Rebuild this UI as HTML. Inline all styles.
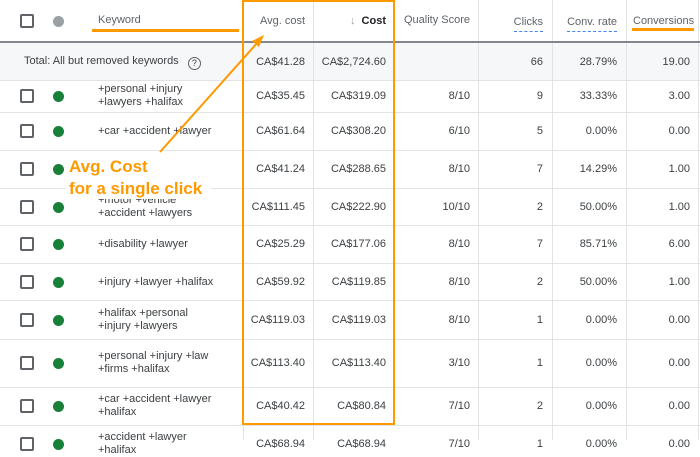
<!DOCTYPE html>
<html><head><meta charset="utf-8"><style>
*{margin:0;padding:0;box-sizing:border-box}
body{width:700px;height:440px;overflow:hidden;background:#fff;font-family:"Liberation Sans",Arial,sans-serif;font-size:11px;color:#3c4043;position:relative}
.a{position:absolute}
.vl{position:absolute;top:0;height:440px;width:1px;background:#e3e3e3}
.hl{position:absolute;left:0;width:700px;height:1px;background:#e3e3e3}
.cb{position:absolute;left:20px;width:14px;height:14px;border:2px solid #5f6368;border-radius:2px}
.dot{position:absolute;left:53px;width:11px;height:11px;border-radius:50%;background:#188038}
.kw{position:absolute;left:98px;line-height:13px;font-size:11px}
.n{position:absolute;text-align:right;line-height:14px}
</style></head><body>
<div class="a" style="left:0;top:42px;width:700px;height:38px;background:#f6f7f9"></div>
<div class="vl" style="left:243px"></div><div class="vl" style="left:313px"></div>
<div class="vl" style="left:478px"></div><div class="vl" style="left:552px"></div><div class="vl" style="left:626px"></div><div class="vl" style="left:698px"></div>
<div class="a" style="left:0;top:41px;width:700px;height:2px;background:#80868b"></div>
<div class="hl" style="top:80px"></div><div class="hl" style="top:112px"></div><div class="hl" style="top:150px"></div><div class="hl" style="top:188px"></div><div class="hl" style="top:225px"></div><div class="hl" style="top:263px"></div><div class="hl" style="top:300px"></div><div class="hl" style="top:339px"></div><div class="hl" style="top:387px"></div><div class="hl" style="top:425px"></div>
<!-- header -->
<div class="cb" style="top:14px"></div>
<div class="dot" style="top:16px;background:#9aa0a6"></div>
<div class="a" style="left:98px;top:14px;color:#5f6368">Keyword</div>
<div class="a" style="left:92px;top:29px;width:147px;height:3px;background:#f90"></div>
<div class="n" style="right:395px;top:14px;color:#5f6368">Avg. cost</div>
<div class="n" style="right:314px;top:14px;font-weight:bold;color:#202124"><span style="color:#9aa0a6;font-weight:normal">↓</span>&nbsp; Cost</div>
<div class="a" style="left:404px;top:14px;color:#5f6368">Quality Score</div>
<div class="n" style="right:157px;top:15px;color:#5f6368;border-bottom:1px dashed #4285f4;padding-bottom:2px">Clicks</div>
<div class="n" style="right:83px;top:15px;color:#5f6368;border-bottom:1px dashed #4285f4;padding-bottom:2px">Conv. rate</div>
<div class="a" style="left:633px;top:15px;color:#5f6368;white-space:nowrap;width:64px;overflow:hidden">Conversions</div>
<div class="a" style="left:632px;top:28px;width:62px;height:3px;background:#f90"></div>
<!-- total -->
<div class="a" style="left:24px;top:55px">Total: All but removed keywords &nbsp;&nbsp;<span style="display:inline-block;width:13px;height:13px;border:1.5px solid #5f6368;border-radius:50%;font-size:9px;text-align:center;line-height:10px;vertical-align:-2px">?</span></div>
<div class="n" style="right:395px;top:55px">CA$41.28</div>
<div class="n" style="right:314px;top:55px">CA$2,724.60</div>
<div class="n" style="right:157px;top:55px">66</div>
<div class="n" style="right:83px;top:55px">28.79%</div>
<div class="n" style="right:10px;top:55px">19.00</div>

<div id="rows"></div>
<script>
var R=[[80,112,"+personal +injury<br>+lawyers +halifax","35.45","319.09","8/10","9","33.33%","3.00"],
[112,150,"+car +accident +lawyer","61.64","308.20","6/10","5","0.00%","0.00"],
[150,188,"+truck +accident +laws","41.24","288.65","8/10","7","14.29%","1.00"],
[188,225,"+motor +vehicle<br>+accident +lawyers","111.45","222.90","10/10","2","50.00%","1.00"],
[225,263,"+disability +lawyer","25.29","177.06","8/10","7","85.71%","6.00"],
[263,300,"+injury +lawyer +halifax","59.92","119.85","8/10","2","50.00%","1.00"],
[300,339,"+halifax +personal<br>+injury +lawyers","119.03","119.03","8/10","1","0.00%","0.00"],
[339,387,"+personal +injury +law<br>+firms +halifax","113.40","113.40","3/10","1","0.00%","0.00"],
[387,425,"+car +accident +lawyer<br>+halifax","40.42","80.84","7/10","2","0.00%","0.00"],
[425,463,"+accident +lawyer<br>+halifax","68.94","68.94","7/10","1","0.00%","0.00"]];
var h="";R.forEach(function(r){var c=(r[0]+r[1])/2;var t=c-7;var two=r[2].indexOf("<br>")>0;
h+='<div class="cb" style="top:'+(c-7)+'px"></div><div class="dot" style="top:'+(c-5)+'px"></div>';
h+='<div class="kw" style="top:'+(two?c-13:c-6)+'px">'+r[2]+'</div>';
h+='<div class="n" style="right:395px;top:'+t+'px">CA$'+r[3]+'</div><div class="n" style="right:314px;top:'+t+'px">CA$'+r[4]+'</div>';
h+='<div class="n" style="right:230px;top:'+t+'px">'+r[5]+'</div><div class="n" style="right:157px;top:'+t+'px">'+r[6]+'</div>';
h+='<div class="n" style="right:83px;top:'+t+'px">'+r[7]+'</div><div class="n" style="right:10px;top:'+t+'px">'+r[8]+'</div>';});
document.getElementById("rows").innerHTML=h;
</script>
<!-- orange box -->
<div class="a" style="left:242px;top:0;width:153px;height:425px;border:2px solid #f90"></div>
<!-- annotation -->
<div class="a" style="left:66px;top:153px;width:145px;height:46px;background:#fff"></div>
<div class="a" style="left:69px;top:156px;font-size:17px;font-weight:bold;color:#f90;line-height:22px">Avg. Cost<br>for a single click</div>
<svg class="a" style="left:0;top:0" width="700" height="440"><line x1="160" y1="152" x2="258" y2="42" stroke="#f90" stroke-width="2"/><polygon points="264,35 252,41 259,47" fill="#f90"/></svg>
</body></html>
